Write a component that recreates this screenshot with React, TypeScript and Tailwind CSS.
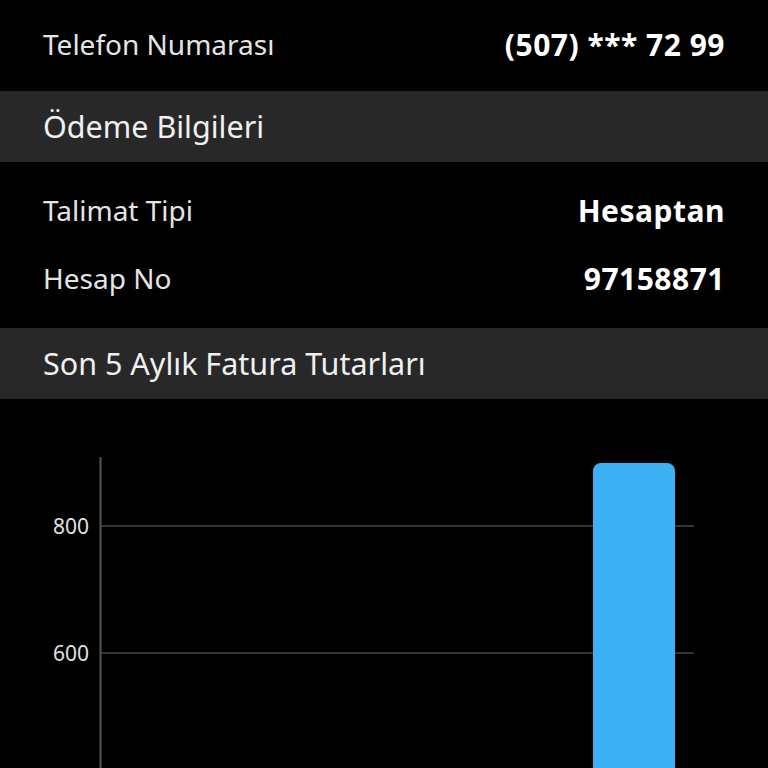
const font = { fontFamily: '"Noto Sans", "Open Sans", sans-serif' };

function Row({ label, value }: { label: string; value: string }) {
  return (
    <div className="flex h-[68px] items-center justify-between px-[43px]">
      <span className="text-[28px] text-[#e4e4e4]">{label}</span>
      <span className="text-[30px] font-bold tracking-[0.5px] text-white">{value}</span>
    </div>
  );
}

function SectionHeader({ title }: { title: string }) {
  return (
    <div className="flex h-[71px] items-center bg-[#282828] px-[43px]">
      <span className="text-[30.5px] text-[#f0f0f0]">{title}</span>
    </div>
  );
}

function Chart() {
  // y scale: 800 at y=69, 600 at y=196 inside the svg (127px per 200)
  const ticks = [
    { label: '800', y: 69 },
    { label: '600', y: 196 },
  ];
  return (
    <svg width="768" height="370" className="block">
      <line x1="100.5" y1="0" x2="100.5" y2="370" stroke="#555" strokeWidth="2" />
      {ticks.map((t) => (
        <g key={t.label}>
          <line x1="101" y1={t.y} x2="694" y2={t.y} stroke="#444" strokeWidth="1.5" />
          <text
            x="89"
            y={t.y + 8}
            textAnchor="end"
            fill="#e0e0e0"
            fontSize="21"
            fontFamily='"Noto Sans", sans-serif'
          >
            {t.label}
          </text>
        </g>
      ))}
      <path d="M593 370 V14 a8 8 0 0 1 8 -8 H667 a8 8 0 0 1 8 8 V370 Z" fill="#3bb1f3" />
    </svg>
  );
}

export default function App() {
  return (
    <div className="h-[768px] w-[768px] overflow-hidden bg-black" style={font}>
      <div className="pt-[10px] pb-[13px]">
        <Row label="Telefon Numarası" value="(507) *** 72 99" />
      </div>
      <SectionHeader title="Ödeme Bilgileri" />
      <div className="pt-[14px] pb-[16px]">
        <Row label="Talimat Tipi" value="Hesaptan" />
        <Row label="Hesap No" value="97158871" />
      </div>
      <SectionHeader title="Son 5 Aylık Fatura Tutarları" />
      <div className="pt-[58px]">
        <Chart />
      </div>
    </div>
  );
}
